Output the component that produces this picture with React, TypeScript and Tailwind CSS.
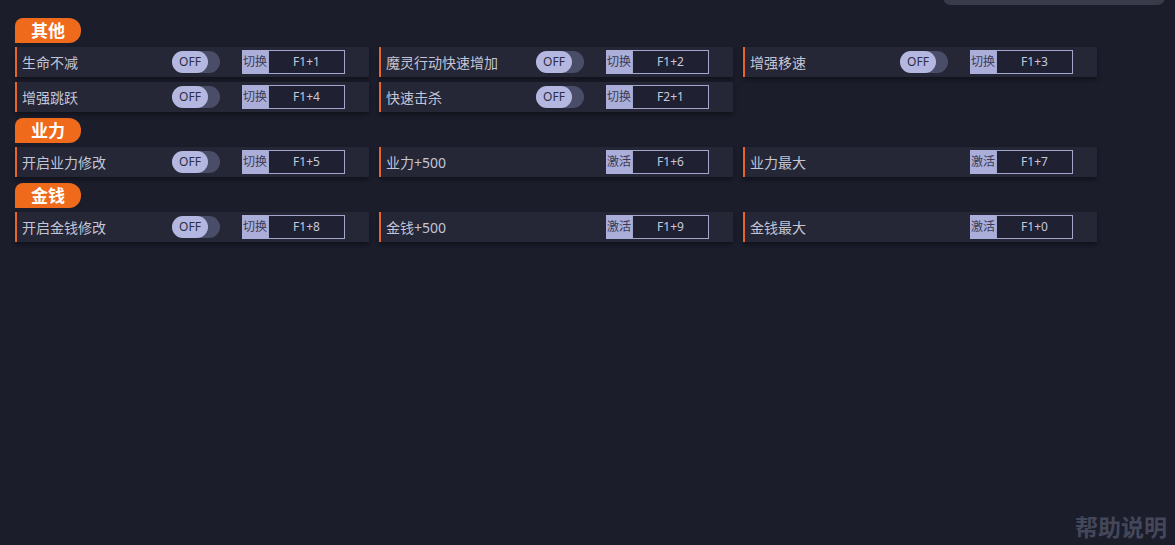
import React from "react"

type Item = { label: string; toggle: boolean; key: string }

const SECTIONS: { title: string; rows: Item[][] }[] = [
    {
        title: "其他",
        rows: [
            [
                { label: "生命不减", toggle: true, key: "F1+1" },
                { label: "魔灵行动快速增加", toggle: true, key: "F1+2" },
                { label: "增强移速", toggle: true, key: "F1+3" },
            ],
            [
                { label: "增强跳跃", toggle: true, key: "F1+4" },
                { label: "快速击杀", toggle: true, key: "F2+1" },
            ],
        ],
    },
    {
        title: "业力",
        rows: [
            [
                { label: "开启业力修改", toggle: true, key: "F1+5" },
                { label: "业力+500", toggle: false, key: "F1+6" },
                { label: "业力最大", toggle: false, key: "F1+7" },
            ],
        ],
    },
    {
        title: "金钱",
        rows: [
            [
                { label: "开启金钱修改", toggle: true, key: "F1+8" },
                { label: "金钱+500", toggle: false, key: "F1+9" },
                { label: "金钱最大", toggle: false, key: "F1+0" },
            ],
        ],
    },
]

const Cheat = ({ item }: { item: Item }) => (
    <div className="relative flex items-center w-[354px] h-[30px] bg-[#252737] border-l-2 border-[#e8652a] shadow-[0_3px_4px_rgba(0,0,0,0.35)]">
        <span className="pl-[5px] pt-[1px] w-[155px] text-[14px] text-[#c3c5d6] whitespace-nowrap">{item.label}</span>
        {item.toggle ? (
            <div className="flex items-center w-[48px] h-[22px] rounded-full bg-[#4a4d68]">
                <div className="flex items-center justify-center w-[36px] h-[22px] rounded-full bg-[#b4b8e0] text-[12px] text-[#2c2e45]">OFF</div>
            </div>
        ) : (
            <div className="w-[48px]" />
        )}
        <div className="flex items-center ml-[22px] h-[24px]">
            <span className="flex items-center justify-center w-[26px] h-[24px] bg-[#aaaed9] text-[12px] text-[#3a3c55]">
                {item.toggle ? "切换" : "激活"}
            </span>
            <span className="flex items-center justify-center w-[77px] h-[24px] border border-[#a3a7cc] bg-[#1f2132] text-[12px] text-[#c6c8da]">
                {item.key}
            </span>
        </div>
    </div>
)

export default function App() {
    return (
        <div
            className="relative w-[1175px] h-[545px] overflow-hidden bg-[#1b1d2b]"
            style={{ fontFamily: '"Noto Sans", "Noto Sans CJK SC", sans-serif' }}
        >
            <div className="absolute right-[10px] top-[-10px] w-[222px] h-[15px] rounded-[8px] bg-[#393b4b]" />
            <div className="flex flex-col pl-[15px] pt-[18px]">
                {SECTIONS.map((sec, si) => (
                    <div key={sec.title} className={`flex flex-col ${si > 0 ? "mt-[6px]" : ""}`}>
                        <div className="flex items-center justify-center w-[66px] h-[25px] rounded-tl-[8px] rounded-r-[12px] bg-[#f06a1c] text-[17px] font-bold text-white">
                            {sec.title}
                        </div>
                        <div className="flex flex-col gap-[5px] mt-[4px]">
                            {sec.rows.map((row, ri) => (
                                <div key={ri} className="flex gap-[10px]">
                                    {row.map(item => (
                                        <Cheat key={item.label} item={item} />
                                    ))}
                                </div>
                            ))}
                        </div>
                    </div>
                ))}
            </div>
            <div className="absolute right-[8px] bottom-[1px] text-[23px] font-bold text-[#44475a]">帮助说明</div>
        </div>
    )
}
